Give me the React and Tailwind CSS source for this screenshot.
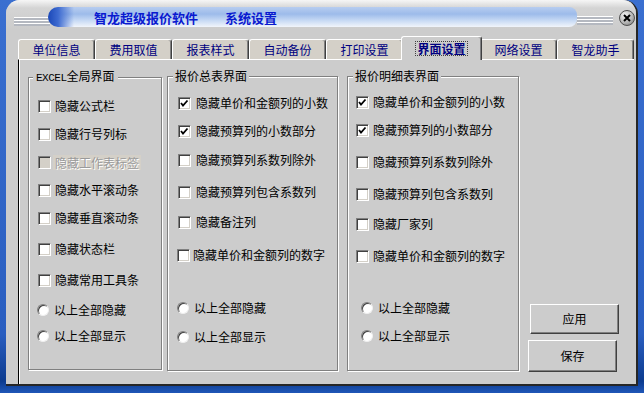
import React from 'react';

const tabs = ['单位信息', '费用取值', '报表样式', '自动备份', '打印设置', '界面设置', '网络设置', '智龙助手'];

// each row: kind, label, row classes (top margin + left inset), gap before text
const excelItems = [
  { kind: 'cb', label: '隐藏公式栏', row: 'mt-[13px] pl-[9px]', gap: 'ml-[4px]' },
  { kind: 'cb', label: '隐藏行号列标', row: 'mt-[12px] pl-[9px]', gap: 'ml-[4px]' },
  { kind: 'cb', label: '隐藏工作表标签', row: 'mt-[12px] pl-[9px]', gap: 'ml-[2px]', disabled: true },
  { kind: 'cb', label: '隐藏水平滚动条', row: 'mt-[12px] pl-[9px]', gap: 'ml-[4px]' },
  { kind: 'cb', label: '隐藏垂直滚动条', row: 'mt-[12px] pl-[9px]', gap: 'ml-[4px]' },
  { kind: 'cb', label: '隐藏状态栏', row: 'mt-[15px] pl-[9px]', gap: 'ml-[4px]' },
  { kind: 'cb', label: '隐藏常用工具条', row: 'mt-[15px] pl-[9px]', gap: 'ml-[4px]' },
  { kind: 'radio', label: '以上全部隐藏', row: 'mt-[14px] pl-[8px]', gap: 'ml-[5px]' },
  { kind: 'radio', label: '以上全部显示', row: 'mt-[10px] pl-[8px]', gap: 'ml-[5px]' },
];

const summaryItems = [
  { kind: 'cb', label: '隐藏单价和金额列的小数', row: 'mt-[12px] pl-[10px]', gap: 'ml-[5px]', checked: true },
  { kind: 'cb', label: '隐藏预算列的小数部分', row: 'mt-[12px] pl-[10px]', gap: 'ml-[5px]', checked: true },
  { kind: 'cb', label: '隐藏预算列系数列除外', row: 'mt-[13px] pl-[10px]', gap: 'ml-[5px]' },
  { kind: 'cb', label: '隐藏预算列包含系数列', row: 'mt-[16px] pl-[10px]', gap: 'ml-[5px]' },
  { kind: 'cb', label: '隐藏备注列', row: 'mt-[14px] pl-[10px]', gap: 'ml-[5px]' },
  { kind: 'cb', label: '隐藏单价和金额列的数字', row: 'mt-[17px] pl-[9px]', gap: 'ml-[3px]' },
  { kind: 'radio', label: '以上全部隐藏', row: 'mt-[37px] pl-[9px]', gap: 'ml-[5px]' },
  { kind: 'radio', label: '以上全部显示', row: 'mt-[13px] pl-[9px]', gap: 'ml-[5px]' },
];

const detailItems = [
  { kind: 'cb', label: '隐藏单价和金额列的小数', row: 'mt-[11px] pl-[8px]', gap: 'ml-[4px]', checked: true },
  { kind: 'cb', label: '隐藏预算列的小数部分', row: 'mt-[12px] pl-[8px]', gap: 'ml-[4px]', checked: true },
  { kind: 'cb', label: '隐藏预算列系数列除外', row: 'mt-[16px] pl-[8px]', gap: 'ml-[4px]' },
  { kind: 'cb', label: '隐藏预算列包含系数列', row: 'mt-[16px] pl-[8px]', gap: 'ml-[4px]' },
  { kind: 'cb', label: '隐藏厂家列', row: 'mt-[14px] pl-[8px]', gap: 'ml-[4px]' },
  { kind: 'cb', label: '隐藏单价和金额列的数字', row: 'mt-[16px] pl-[8px]', gap: 'ml-[4px]' },
  { kind: 'radio', label: '以上全部隐藏', row: 'mt-[36px] pl-[13px]', gap: 'ml-[5px]' },
  { kind: 'radio', label: '以上全部显示', row: 'mt-[12px] pl-[13px]', gap: 'ml-[5px]' },
];

const CheckBox = ({ checked, disabled }) => (
  <div
    className={`w-[13px] h-[13px] shrink-0 border border-t-[#808080] border-l-[#808080] border-r-white border-b-white shadow-[inset_1px_1px_0_#404040,inset_-1px_-1px_0_#d4d0c8] ${
      disabled ? 'bg-[#d4d0c8]' : 'bg-white'
    }`}
  >
    {checked && (
      <svg width="11" height="11" viewBox="0 0 11 11" className="block">
        <polyline points="2,5 4,7.5 8.5,2.5" fill="none" stroke="#000" strokeWidth="1.8" />
      </svg>
    )}
  </div>
);

const Radio = () => (
  <div className="w-[12px] h-[12px] shrink-0 rounded-full bg-white border border-t-[#808080] border-l-[#808080] border-r-[#f0f0f0] border-b-[#f0f0f0] shadow-[inset_1px_1px_0_#404040]" />
);

const Item = ({ item }) => (
  <div className={`flex items-center h-[16px] ${item.row}`}>
    {item.kind === 'cb' ? <CheckBox checked={item.checked} disabled={item.disabled} /> : <Radio />}
    {item.disabled ? (
      <span className={`${item.gap} px-[2px] h-[15px] leading-[15px] bg-[#d4d0c8] text-[#9a9a9a] [text-shadow:1px_1px_0_#fff]`}>
        {item.label}
      </span>
    ) : (
      <span className={`${item.gap} whitespace-nowrap`}>{item.label}</span>
    )}
  </div>
);

const Group = ({ title, items, className, legendClass }) => (
  <fieldset
    className={`shrink-0 border border-[#808080] shadow-[inset_1px_1px_0_#fff,1px_1px_0_#fff] ${className}`}
  >
    <legend className={`leading-[14px] bg-[#cccccc] ${legendClass}`}>{title}</legend>
    {items.map((it) => (
      <Item key={it.label} item={it} />
    ))}
  </fieldset>
);

const Stripes = ({ className }) => (
  <div
    className={`bg-[repeating-linear-gradient(to_bottom,#ffffff_0px,#ffffff_1px,#b4b8c0_1px,#b4b8c0_3px)] ${className}`}
  />
);

export default function App() {
  return (
    <div className="relative w-[644px] h-[393px] overflow-hidden bg-[linear-gradient(to_bottom,#3a6fd0,#2a5ec0_85%,#0c3b8f_97%,#1f57b8)] font-['Noto_Sans_CJK_SC','Noto_Sans',sans-serif] text-[12px] text-black">
      <div className="ml-[6px] w-[632px] h-[386px] flex flex-col bg-[#cccccc] rounded-tl-[14px] rounded-tr-[14px] border-r-2 border-b-2 border-[#262626]">
        {/* title bar */}
        <div className="h-[30px] flex items-start rounded-tl-[14px] rounded-tr-[14px] bg-[linear-gradient(to_bottom,#f6f6f6,#d4d4d4_8px,#cccccc)]">
          <Stripes className="mt-[17px] ml-[8px] w-[36px] h-[9px]" />
          <div className="mt-[7px] -ml-[2px] w-[529px] h-[20px] rounded-l-[10px] rounded-r-[8px] flex items-center pt-[2px] pl-[46px] bg-[linear-gradient(to_right,#1b48b8,#3d6ad0_10px,transparent_26px),linear-gradient(to_bottom,#b7cdf0,#9dbbea_35%,#cadcf5_70%,#f1f5fb)] text-[13px] font-bold text-[#0a1ad0]">
            <span>智龙超级报价软件</span>
            <span className="ml-[27px]">系统设置</span>
          </div>
          <Stripes className="mt-[16px] w-[36px] h-[9px]" />
          <div className="mt-[10px] ml-[6px] w-[16px] h-[16px] rounded-full border border-[#505050] bg-[radial-gradient(circle_at_35%_30%,#f4f4f4,#b0b0b0_60%,#707070)] flex items-center justify-center">
            <svg width="8" height="8" viewBox="0 0 8 8">
              <path d="M1 1 L7 7 M7 1 L1 7" stroke="#000" strokeWidth="2" />
            </svg>
          </div>
        </div>

        {/* tabs */}
        <div className="mt-[6px] h-[23px] pl-[12px] flex items-end">
          {tabs.map((t) =>
            t === '界面设置' ? (
              <div
                key={t}
                className="relative z-10 -mx-[2px] -mb-[1px] w-[81px] h-[24px] shrink-0 flex items-start justify-center pt-[4px] bg-[#cccccc] border-t border-l border-white border-r border-r-[#404040] rounded-t-[3px] shadow-[inset_-1px_0_0_#808080]"
              >
                <span className="px-[1px] leading-[13px] font-bold text-[#000080] border border-dotted border-[#404040]">
                  {t}
                </span>
              </div>
            ) : (
              <div
                key={t}
                className="w-[77px] h-[20px] shrink-0 flex items-center justify-center bg-[#d4d0c8] border-t border-l border-white border-r border-r-[#404040] rounded-t-[3px] shadow-[inset_-1px_0_0_#808080] text-[#000080]"
              >
                {t}
              </div>
            )
          )}
        </div>

        {/* panel */}
        <div className="ml-[12px] w-[616px] flex-1 flex items-start pt-[9px] border-t border-white border-l border-l-black shadow-[inset_1px_0_0_#fff]">
          <Group
            title={
              <>
                <span className="font-['Liberation_Mono',monospace] text-[11px] tracking-[-0.5px]">EXCEL</span>全局界面
              </>
            }
            items={excelItems}
            className="ml-[9px] w-[134px] h-[301px]"
            legendClass="ml-[4px] px-[3px]"
          />
          <Group
            title="报价总表界面"
            items={summaryItems}
            className="ml-[5px] w-[171px] h-[302px]"
            legendClass="ml-[5px] px-[2px]"
          />
          <Group
            title="报价明细表界面"
            items={detailItems}
            className="ml-[9px] w-[172px] h-[302px]"
            legendClass="ml-[5px] px-[2px]"
          />
          <div className="ml-[11px] flex flex-col">
            <button className="mt-[235px] w-[89px] h-[30px] bg-[#cccccc] border border-t-white border-l-white border-r-[#404040] border-b-[#404040] shadow-[inset_-1px_-1px_0_#808080]">
              应用
            </button>
            <button className="mt-[6px] -ml-[2px] w-[89px] h-[32px] bg-[#cccccc] border border-t-white border-l-white border-r-[#404040] border-b-[#404040] shadow-[inset_-1px_-1px_0_#808080]">
              保存
            </button>
          </div>
        </div>
      </div>
    </div>
  );
}
